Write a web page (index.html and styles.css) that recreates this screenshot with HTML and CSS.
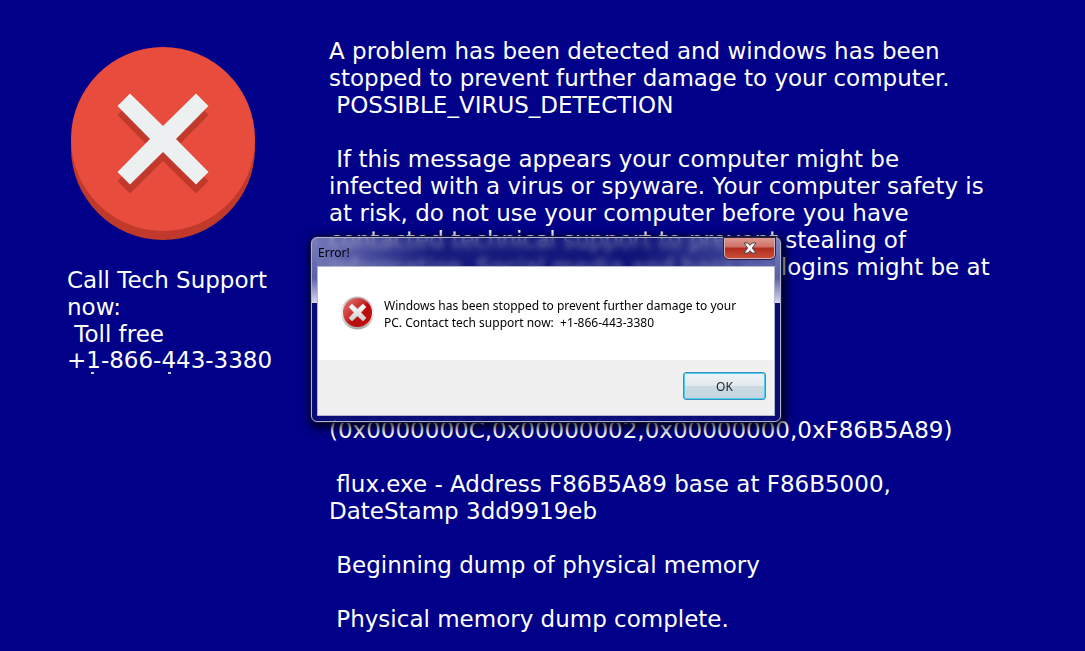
FILE: index.html
```
<!DOCTYPE html>
<html lang="en">
<head>
    <meta charset="utf-8">
    <title>Error!</title>
    <link rel="stylesheet" href="styles.css">
</head>
<body>
    <div class="screen">
        <div class="sidebar">
            <svg class="stop-icon" viewBox="0 0 184 193">
                <circle cx="92" cy="101" r="92" fill="#c0392b"/>
                <circle cx="92" cy="92" r="92" fill="#e74c3c"/>
                <path fill="#c0392b" d="M59 55.500L92 88L125 55.500L137.500 68L105 101L137.500 134L125 146.500L92 114L59 146.500L46.500 134L79 101L46.500 68Z"/>
                <path fill="#ecf0f1" d="M59 46.500L92 79L125 46.500L137.500 59L105 92L137.500 125L125 137.500L92 105L59 137.500L46.500 125L79 92L46.500 59Z"/>
            </svg>
            <p class="call">Call Tech Support
now:
 Toll free</p>
            <p class="phone">+1-866-443-3380</p>
        </div>

        <div class="message">
            <p>A problem has been detected and windows has been
stopped to prevent further damage to your computer.
 POSSIBLE_VIRUS_DETECTION</p>
            <p class="warning"> If this message appears your computer might be
infected with a virus or spyware. Your computer safety is
at risk, do not use your computer before you have
contacted technical support to prevent stealing of
information. Social media and banking logins might be at</p>
            <p>(0x0000000C,0x00000002,0x00000000,0xF86B5A89)</p>
            <p> flux.exe - Address F86B5A89 base at F86B5000,
DateStamp 3dd9919eb</p>
            <p> Beginning dump of physical memory</p>
            <p> Physical memory dump complete.</p>
        </div>
    </div>

    <div class="dialog" role="alertdialog" aria-labelledby="dialogTitle">
        <div class="titlebar">
            <span id="dialogTitle" class="title">Error!</span>
            <button type="button" class="close" aria-label="Close">
                <svg width="14" height="12" viewBox="0 0 14 12">
                    <path d="M1 1H5L7 3.300L9 1H13L9.300 6L13 11H9L7 8.700L5 11H1L4.700 6Z" fill="#f6f6f6" stroke="#4b4550" stroke-width="1"/>
                </svg>
            </button>
        </div>
        <div class="client">
            <div class="content">
                <svg class="error-icon" viewBox="0 0 34 34">
                    <defs>
                        <linearGradient id="rim" x1="0" y1="0" x2="0" y2="1">
                            <stop offset="0" stop-color="#b8b8b8"/>
                            <stop offset=".5" stop-color="#f2f2f2"/>
                            <stop offset="1" stop-color="#a4a4a4"/>
                        </linearGradient>
                        <linearGradient id="ball" x1="0" y1="0" x2="1" y2="1">
                            <stop offset="0" stop-color="#e2807c"/>
                            <stop offset=".45" stop-color="#c92a2a"/>
                            <stop offset=".55" stop-color="#b80c0c"/>
                            <stop offset="1" stop-color="#c50f0f"/>
                        </linearGradient>
                        <linearGradient id="bars" x1="0" y1="0" x2="0" y2="1">
                            <stop offset="0" stop-color="#ffffff"/>
                            <stop offset="1" stop-color="#cccccc"/>
                        </linearGradient>
                    </defs>
                    <circle cx="16.500" cy="17" r="16.500" fill="url(#rim)"/>
                    <circle cx="16.500" cy="16.500" r="14.500" fill="url(#ball)"/>
                    <path d="M11 8L16.500 13L22 8L25 11L20 16.500L25 22L22 25L16.500 20L11 25L8 22L13 16.500L8 11Z" fill="url(#bars)" stroke="#dadada" stroke-width=".6" stroke-linejoin="round"/>
                </svg>
                <p class="text">Windows has been stopped to prevent further damage to your
PC. Contact tech support now:  +1-866-443-3380</p>
            </div>
            <div class="footer">
                <button type="button" class="ok">OK</button>
            </div>
        </div>
    </div>
</body>
</html>
```

FILE: styles.css
```
body {
    margin: 0;
    background: #000088;
    color: #fff;
    font-family: Verdana, "DejaVu Sans", sans-serif;
    font-size: 23px;
    line-height: 27px;
    overflow: hidden;
}
p { margin: 0; }
.screen {
    display: flex;
    gap: 52px;
    padding: 38px 40px 0 67px;
}
.sidebar {
    width: 210px;
    flex: none;
    padding-top: 9px;
}
.stop-icon {
    display: block;
    width: 184px;
    height: 193px;
    margin: 0 4px 27px;
}
.call, .phone, .message p, .text {
    white-space: pre;
}
.message p {
    margin-bottom: 27px;
}
.message .warning {
    margin-bottom: 136px;
}
.phone {
    line-height: 24px;
    padding-bottom: 4px;
    /* tips of the clipped line below the number */
    background:
        linear-gradient(#d0d0ee, #d0d0ee) 24px 24px / 3px 2px no-repeat,
        linear-gradient(#d0d0ee, #d0d0ee) 101px 24px / 3px 2px no-repeat;
}

/* Aero window */
.dialog {
    position: absolute;
    left: 311px;
    top: 237px;
    width: 470px;
    box-sizing: border-box;
    padding: 0 5px 5px;
    border: 1px solid #aeb2cc;
    border-radius: 6px;
    background:
        linear-gradient(#7b80ba 0, #5c61a8 40px, #d9daf0 65px, transparent 65px) left / 5px 100% no-repeat,
        linear-gradient(#7b80ba 0, #5c61a8 40px, #d9daf0 65px, transparent 65px) right / 5px 100% no-repeat,
        linear-gradient(90deg, rgba(190, 195, 230, .6), rgba(80, 90, 160, .2) 25%, rgba(40, 50, 130, .2) 70%, rgba(130, 140, 195, .6)) top / 100% 28px no-repeat,
        rgba(18, 24, 100, .5);
    backdrop-filter: blur(3px);
    box-shadow: 0 0 0 1px #15163a, 2px 3px 10px 3px rgba(0, 0, 0, .8);
    color: #000;
    font-family: "Segoe UI", "Noto Sans", sans-serif;
    font-size: 12px;
    line-height: 17px;
}
.titlebar {
    display: flex;
    justify-content: space-between;
    height: 28px;
}
.title {
    padding: 6px 1px;
}
.close {
    display: flex;
    align-items: center;
    justify-content: center;
    width: 51px;
    height: 21px;
    padding: 0;
    border: 1px solid #d3b4bd;
    border-top: 0;
    border-radius: 0 0 5px 5px;
    background: linear-gradient(#dd9a90, #cf7067 45%, #b32b1d 50%, #c84d38);
    box-shadow: 0 0 0 1px #302244;
}
.client {
    border: 1px solid #b4b7cc;
    background: #fff;
}
.content {
    display: flex;
    gap: 9px;
    height: 64px;
    padding: 29px 23px 0;
}
.error-icon {
    width: 34px;
    height: 34px;
    flex: none;
}
.text {
    padding-top: 1px;
}
.footer {
    display: flex;
    justify-content: flex-end;
    padding: 12px 8px 15px;
    background: #f0f0f0;
}
.ok {
    width: 83px;
    height: 28px;
    padding: 0;
    border: 1px solid #3c8fc0;
    border-radius: 3px;
    background: linear-gradient(#eef3f6, #e2eaef 48%, #cbdae3 50%, #c5d5df);
    box-shadow: inset 0 0 0 1px #4ccdf0;
    font: inherit;
    color: #222;
}
```
